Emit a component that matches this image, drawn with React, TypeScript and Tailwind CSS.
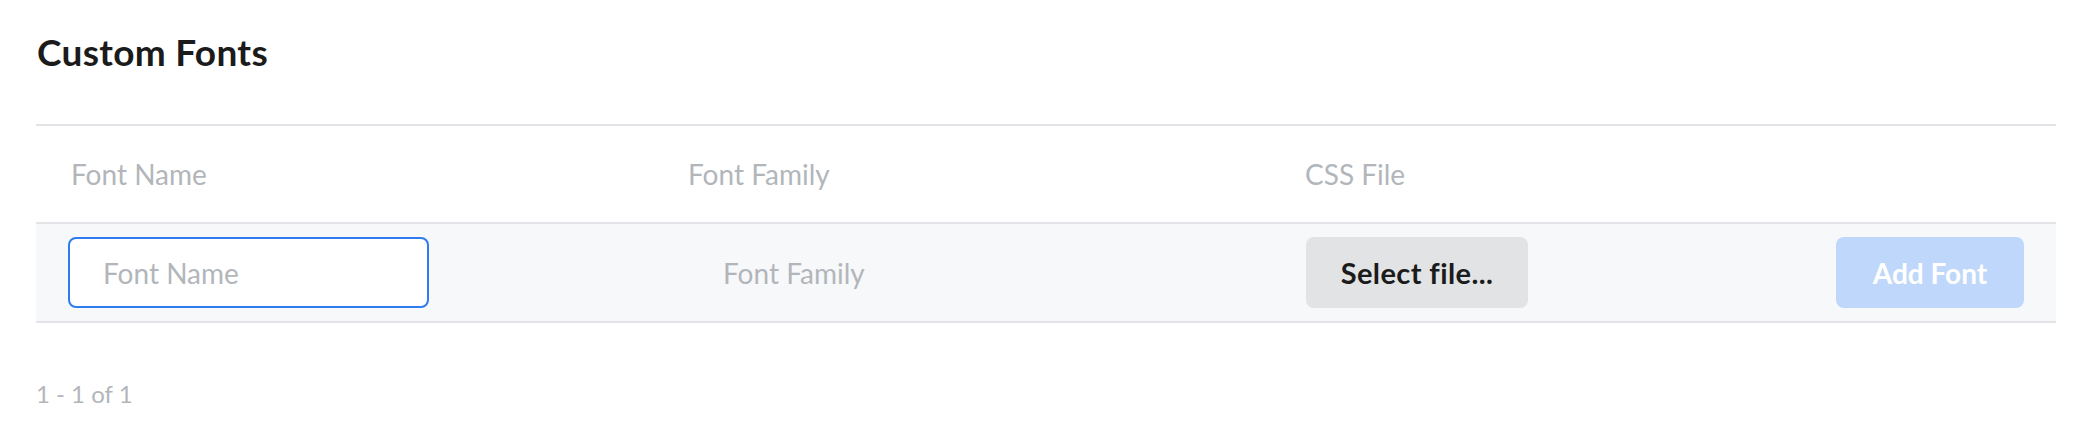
import React from 'react';

const font = { fontFamily: 'Lato, "Noto Sans", sans-serif' };

export default function App() {
  return (
    <div className="w-[2100px] h-[448px] bg-white text-[#1c1c1e]" style={font}>
      <div className="pl-[36px] pr-[44px] pt-[33px]">
        <h1 className="text-[37px] leading-[37px] font-bold text-[#1b1b1b] tracking-[0.3px] pl-[1px]">Custom Fonts</h1>

        <div className="mt-[54px] border-t-2 border-[#e3e4e7]">
          {/* header row */}
          <div className="grid grid-cols-[617px_617px_1fr_252px] h-[98px] items-center border-b-2 border-[#e3e4e7] text-[28px] leading-[28px] text-[#b2b6bb]">
            <div className="pl-[35px]">Font Name</div>
            <div className="pl-[35px]">Font Family</div>
            <div className="pl-[35px]">CSS File</div>
            <div />
          </div>

          {/* input row */}
          <div className="grid grid-cols-[617px_617px_1fr_252px] h-[99px] items-center bg-[#f7f8fa] border-b-2 border-[#e3e4e7] text-[28px] leading-[28px]">
            <div className="pl-[32px]">
              <input
                placeholder="Font Name"
                className="w-[361px] h-[71px] rounded-[8px] border-2 border-[#2f7cf0] bg-white pl-[33px] text-[28px] outline-none placeholder:text-[#b2b6bb]"
                style={font}
              />
            </div>
            <div className="pl-[32px]">
              <input
                placeholder="Font Family"
                className="w-[361px] h-[71px] rounded-[8px] border-2 border-transparent bg-transparent pl-[36px] text-[28px] outline-none placeholder:text-[#b2b6bb]"
                style={font}
              />
            </div>
            <div className="pl-[36px]">
              <button className="w-[222px] h-[71px] rounded-[8px] bg-[#e2e3e5] font-bold text-[29px] tracking-[0.4px] text-[#1b1b1b]" style={font}>
                Select file...
              </button>
            </div>
            <div className="flex justify-end pr-[32px]">
              <button className="w-[188px] h-[71px] rounded-[8px] bg-[#bfd7fa] font-bold text-[28px] text-white" style={font}>
                Add Font
              </button>
            </div>
          </div>
        </div>

        <div className="mt-[59px] text-[24px] leading-[24px] text-[#b2b6bb]">1 - 1 of 1</div>
      </div>
    </div>
  );
}
